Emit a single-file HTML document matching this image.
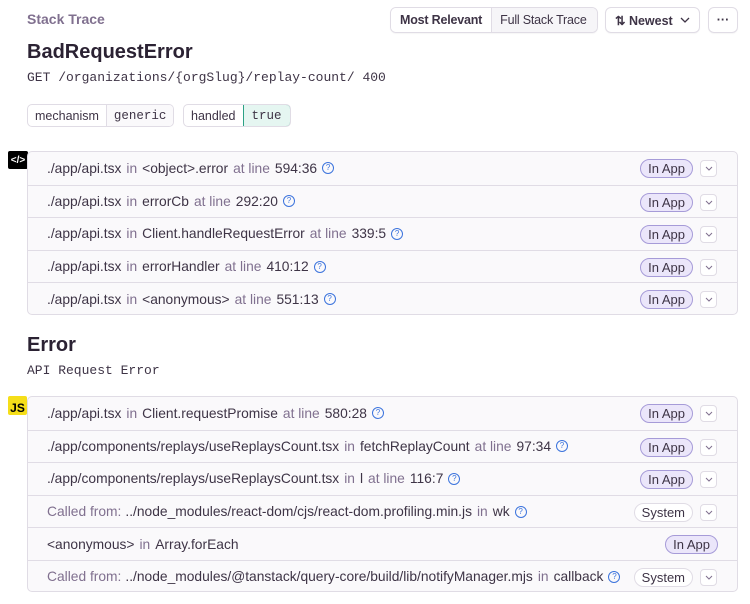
<!DOCTYPE html>
<html><head><meta charset="utf-8"><style>
*{box-sizing:border-box;margin:0;padding:0}
body{width:750px;height:604px;background:#fff;font-family:"Liberation Sans",sans-serif;color:#3e3446;position:relative;overflow:hidden}
.abs{position:absolute;white-space:nowrap}
.mono{font-family:"Liberation Mono",monospace}
.btn{border:1px solid #e0dce5;border-radius:6px;height:26px;font-size:12.5px;display:flex;align-items:center;box-shadow:0 1px 1px rgba(0,0,0,.04);white-space:nowrap}
.tag{display:flex;border:1px solid #e0dce5;border-radius:5px;height:23px;font-size:12.5px;overflow:hidden}
.tag span{display:flex;align-items:center;padding:0 7px}
.box{position:absolute;left:27px;width:711px;border:1px solid #e0dce5;border-radius:5px;background:#faf9fb;overflow:hidden}
.row{height:32.6px;border-top:1px solid #e0dce5;display:flex;align-items:center;padding-left:19px;font-size:13.8px;position:relative;white-space:nowrap}
.row:first-child{border-top:none}
.g{color:#80708f;margin:0 5px}
.q{display:inline-block;width:12px;height:12px;border:1px solid #3c74dd;border-radius:50%;color:#3c74dd;font-size:8px;line-height:10px;text-align:center;margin-left:5px}
.pill{position:absolute;right:44px;top:7px;height:19px;border-radius:10px;border:1px solid #a69bd8;background:#ebe6fa;font-size:13px;display:flex;align-items:center;padding:0 7px;color:#3e3446}
.pill.sys{border-color:#e0dce5;background:#fff}
.pill.nochev{right:19px}
.chev{position:absolute;right:20px;top:8px;width:17px;height:17px;border:1px solid #e0dce5;border-radius:4px;background:#fff;display:flex;align-items:center;justify-content:center}
.cf{color:#80708f;margin-right:4px}
</style></head><body>
<div class="abs" style="left:27px;top:11px;font-size:14px;font-weight:bold;color:#80708f">Stack Trace</div>
<div class="abs btn" style="left:390px;top:7px;width:208px;padding:0;overflow:hidden">
 <div style="height:100%;display:flex;align-items:center;padding:0 9px;font-weight:bold;background:#fff;border-right:1px solid #e0dce5;letter-spacing:-0.2px">Most Relevant</div>
 <div style="height:100%;display:flex;align-items:center;padding:0 8px;background:#f6f5f8;flex:1;letter-spacing:-0.2px">Full Stack Trace</div>
</div>
<div class="abs btn" style="left:605px;top:7px;width:95px;padding-left:9px;font-weight:bold">⇅&nbsp;Newest&nbsp;<svg width="10" height="6" viewBox="0 0 10 6" style="margin-left:4px"><path d="M1 1l4 4 4-4" stroke="#3e3446" fill="none" stroke-width="1.3"/></svg></div>
<div class="abs btn" style="left:708px;top:7px;width:30px;justify-content:center;font-weight:bold">···</div>

<div class="abs" style="left:27px;top:41px;font-size:20px;font-weight:bold;color:#2b2233">BadRequestError</div>
<div class="abs mono" style="left:27px;top:70px;font-size:13px">GET /organizations/{orgSlug}/replay-count/ 400</div>
<div class="abs tag" style="left:27px;top:104px"><span>mechanism</span><span class="mono" style="border-left:1px solid #e0dce5;background:#faf9fb">generic</span></div>
<div class="abs tag" style="left:183px;top:104px"><span>handled</span><span class="mono" style="border:1px solid #2ba185;border-radius:0 5px 5px 0;background:#e5f6f1;margin:-1px -1px -1px 0;padding:0 8px">true</span></div>

<div class="abs" style="left:8px;top:151px;width:20px;height:18px;background:#000;color:#fff;font-size:10px;font-weight:bold;display:flex;align-items:center;justify-content:center;border-radius:2px">&lt;/&gt;</div>
<div class="box" style="top:151px;height:164px">
 <div class="row">./app/api.tsx<span class="g">in</span>&lt;object&gt;.error<span class="g">at line</span>594:36<span class="q">?</span><span class="pill">In App</span><span class="chev"><svg width="8" height="5"><path d="M1 1l3 3 3-3" stroke="#80708f" fill="none"/></svg></span></div>
 <div class="row">./app/api.tsx<span class="g">in</span>errorCb<span class="g">at line</span>292:20<span class="q">?</span><span class="pill">In App</span><span class="chev"><svg width="8" height="5"><path d="M1 1l3 3 3-3" stroke="#80708f" fill="none"/></svg></span></div>
 <div class="row">./app/api.tsx<span class="g">in</span>Client.handleRequestError<span class="g">at line</span>339:5<span class="q">?</span><span class="pill">In App</span><span class="chev"><svg width="8" height="5"><path d="M1 1l3 3 3-3" stroke="#80708f" fill="none"/></svg></span></div>
 <div class="row">./app/api.tsx<span class="g">in</span>errorHandler<span class="g">at line</span>410:12<span class="q">?</span><span class="pill">In App</span><span class="chev"><svg width="8" height="5"><path d="M1 1l3 3 3-3" stroke="#80708f" fill="none"/></svg></span></div>
 <div class="row">./app/api.tsx<span class="g">in</span>&lt;anonymous&gt;<span class="g">at line</span>551:13<span class="q">?</span><span class="pill">In App</span><span class="chev"><svg width="8" height="5"><path d="M1 1l3 3 3-3" stroke="#80708f" fill="none"/></svg></span></div>
</div>

<div class="abs" style="left:27px;top:334px;font-size:20px;font-weight:bold;color:#2b2233">Error</div>
<div class="abs mono" style="left:27px;top:363px;font-size:13px">API Request Error</div>

<div class="abs" style="left:8px;top:396px;width:19px;height:19px;background:#f5de19;color:#000;font-size:12px;font-weight:bold;display:flex;align-items:flex-end;justify-content:center;border-radius:2px">JS</div>
<div class="box" style="top:396px;height:196px">
 <div class="row">./app/api.tsx<span class="g">in</span>Client.requestPromise<span class="g">at line</span>580:28<span class="q">?</span><span class="pill">In App</span><span class="chev"><svg width="8" height="5"><path d="M1 1l3 3 3-3" stroke="#80708f" fill="none"/></svg></span></div>
 <div class="row">./app/components/replays/useReplaysCount.tsx<span class="g">in</span>fetchReplayCount<span class="g">at line</span>97:34<span class="q">?</span><span class="pill">In App</span><span class="chev"><svg width="8" height="5"><path d="M1 1l3 3 3-3" stroke="#80708f" fill="none"/></svg></span></div>
 <div class="row">./app/components/replays/useReplaysCount.tsx<span class="g">in</span>l<span class="g">at line</span>116:7<span class="q">?</span><span class="pill">In App</span><span class="chev"><svg width="8" height="5"><path d="M1 1l3 3 3-3" stroke="#80708f" fill="none"/></svg></span></div>
 <div class="row"><span class="cf">Called from:</span>../node_modules/react-dom/cjs/react-dom.profiling.min.js<span class="g">in</span>wk<span class="q">?</span><span class="pill sys">System</span><span class="chev"><svg width="8" height="5"><path d="M1 1l3 3 3-3" stroke="#80708f" fill="none"/></svg></span></div>
 <div class="row">&lt;anonymous&gt;<span class="g">in</span>Array.forEach<span class="pill nochev">In App</span></div>
 <div class="row"><span class="cf">Called from:</span>../node_modules/@tanstack/query-core/build/lib/notifyManager.mjs<span class="g">in</span>callback<span class="q">?</span><span class="pill sys">System</span><span class="chev"><svg width="8" height="5"><path d="M1 1l3 3 3-3" stroke="#80708f" fill="none"/></svg></span></div>
</div>
</body></html>
